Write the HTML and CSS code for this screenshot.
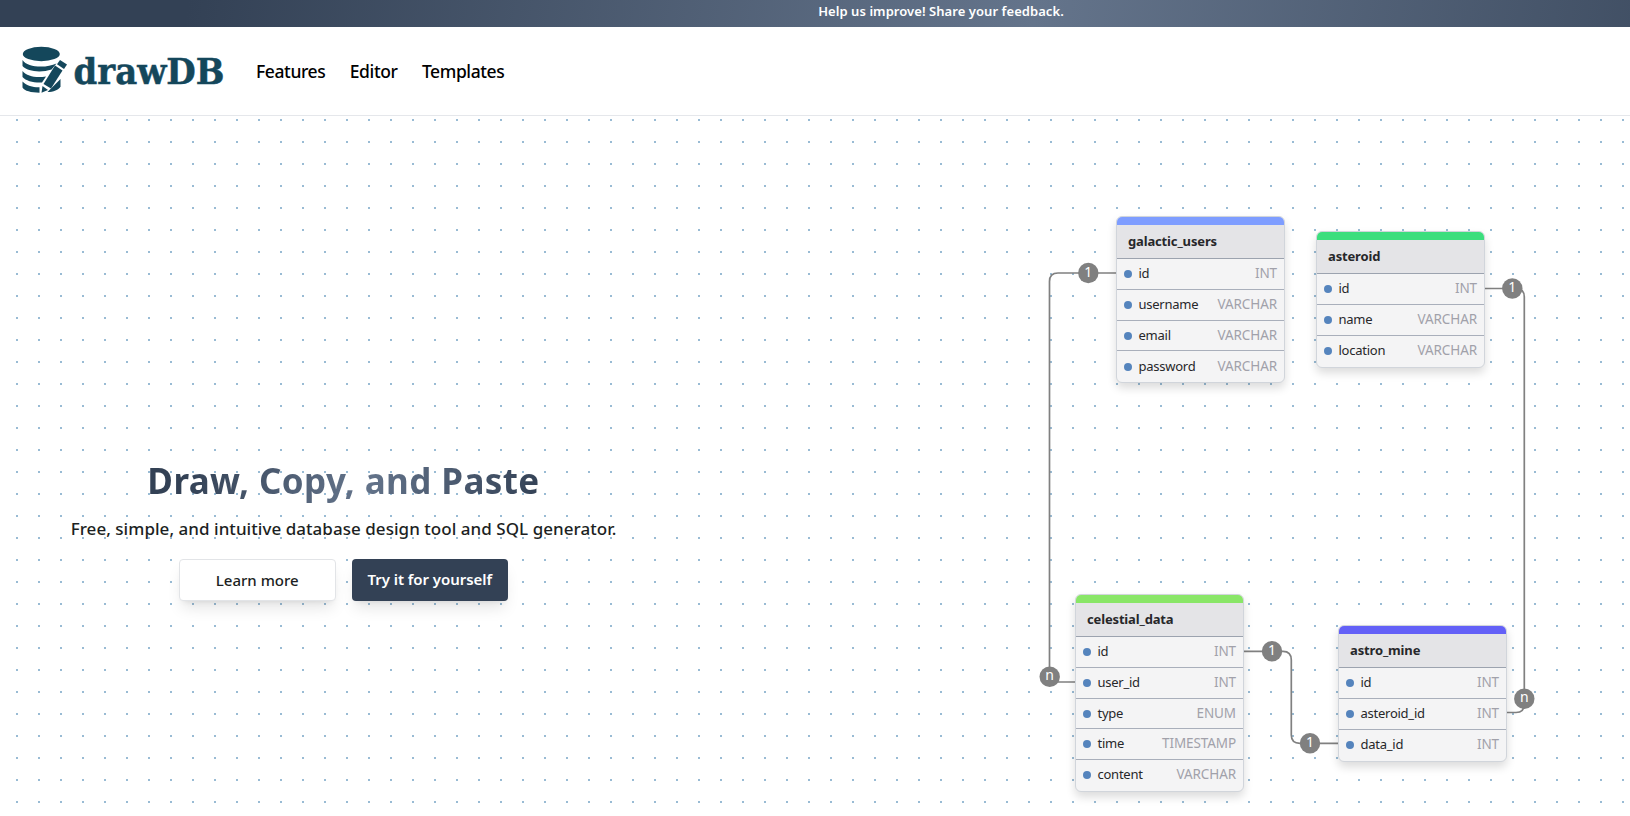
FILE: index.html
```html
<!DOCTYPE html>
<html lang="en">
<head>
<meta charset="utf-8">
<title>drawDB</title>
<link rel="stylesheet" href="styles.css">
</head>
<body>
<div class="banner"><a class="banner-link">Help us improve! Share your feedback.</a></div>
<header class="navbar">
  <svg class="logo" width="208" height="52" viewBox="0 0 208 52" aria-label="drawDB">
    <g class="logo-ink" transform="translate(-20 -45)">
      <ellipse cx="41.300" cy="54" rx="18.500" ry="7.200"/>
      <path d="M22.500 60C27 67.500 46 68.500 56.500 63.500L51.500 69.500C41 73 27 71.500 22.500 66Z"/>
      <path d="M22.500 71C27 76.500 36 78 46 76.500L42 82.500C34 83 26 81 22.500 77Z"/>
      <path d="M22.500 81.500C27 86 34 87.500 39.500 87.200V92.700C31 92.500 24.500 91 22.500 87.500Z"/>
      <path d="M60.500 79V86.500C59 90 53 92 47.500 92Z"/>
      <path d="M55 65.500L62.500 70.500L51 88.500L43.500 84Z"/>
      <path d="M60 60L67 64.500L64 69L57 64.300Z"/>
      <path d="M42.500 86L48 90L41.500 92.700Z"/>
    </g>
    <text class="logo-ink logo-text" x="53.500" y="39" textLength="151" lengthAdjust="spacingAndGlyphs">drawDB</text>
  </svg>
  <nav class="nav"><a>Features</a><a>Editor</a><a>Templates</a></nav>
</header>
<main class="hero">
  <section class="intro">
    <h1 class="title">Draw, Copy, and Paste</h1>
    <p class="tagline">Free, simple, and intuitive database design tool and SQL generator.</p>
    <div class="actions">
      <button class="btn btn-light">Learn more</button>
      <button class="btn btn-dark">Try it for yourself</button>
    </div>
  </section>
  <div class="canvas">
    <svg class="links" width="1630" height="700" viewBox="0 116 1630 700">
      <path d="M1116 273H1058Q1049.500 273 1049.500 281.500V673.500Q1049.500 682 1058 682H1076"/>
      <path d="M1485 288.500H1516Q1524.300 288.500 1524.300 297V704Q1524.300 712.500 1516 712.500H1506"/>
      <path d="M1244 651.300H1283Q1291.300 651.300 1291.300 660V735Q1291.300 743.300 1300 743.300H1339"/>
      <circle cx="1088.300" cy="273" r="10.200"/><text x="1088.300" y="277">1</text>
      <circle cx="1049.700" cy="676.700" r="10.200"/><text x="1049.700" y="680">n</text>
      <circle cx="1512.300" cy="288.500" r="10.200"/><text x="1512.300" y="292">1</text>
      <circle cx="1524.300" cy="698.700" r="10.200"/><text x="1524.300" y="702">n</text>
      <circle cx="1272" cy="651.300" r="10.200"/><text x="1272" y="655">1</text>
      <circle cx="1310" cy="743.300" r="10.200"/><text x="1310" y="747">1</text>
    </svg>
    <div class="table galactic">
      <div class="bar"></div><div class="name">galactic_users</div>
      <div class="row"><i></i><span>id</span><b>INT</b></div>
      <div class="row"><i></i><span>username</span><b>VARCHAR</b></div>
      <div class="row"><i></i><span>email</span><b>VARCHAR</b></div>
      <div class="row"><i></i><span>password</span><b>VARCHAR</b></div>
    </div>
    <div class="table asteroid">
      <div class="bar"></div><div class="name">asteroid</div>
      <div class="row"><i></i><span>id</span><b>INT</b></div>
      <div class="row"><i></i><span>name</span><b>VARCHAR</b></div>
      <div class="row"><i></i><span>location</span><b>VARCHAR</b></div>
    </div>
    <div class="table celestial">
      <div class="bar"></div><div class="name">celestial_data</div>
      <div class="row"><i></i><span>id</span><b>INT</b></div>
      <div class="row"><i></i><span>user_id</span><b>INT</b></div>
      <div class="row"><i></i><span>type</span><b>ENUM</b></div>
      <div class="row"><i></i><span>time</span><b>TIMESTAMP</b></div>
      <div class="row"><i></i><span>content</span><b>VARCHAR</b></div>
    </div>
    <div class="table mine">
      <div class="bar"></div><div class="name">astro_mine</div>
      <div class="row"><i></i><span>id</span><b>INT</b></div>
      <div class="row"><i></i><span>asteroid_id</span><b>INT</b></div>
      <div class="row"><i></i><span>data_id</span><b>INT</b></div>
    </div>
  </div>
</main>
</body>
</html>
```
FILE: styles.css
```css
* { box-sizing: border-box; }
body {
  margin: 0;
  height: 816px;
  overflow: hidden;
  display: flex;
  flex-direction: column;
  font-family: "Noto Sans", "Open Sans", sans-serif;
  color: #1c1f23;
  background: #fff;
}
.banner {
  height: 27px;
  flex: none;
  display: flex;
  justify-content: center;
  padding: 2px 0 0 252px;
  background: linear-gradient(100deg, #334155 10%, #64748b 55%, #334155 100%) 0 0 / 1882px 27px no-repeat;
}
.banner-link { color: #fff; font-size: 13px; line-height: 18px; font-weight: 600; letter-spacing: 0.060px; }
.navbar {
  height: 89px;
  flex: none;
  display: flex;
  align-items: center;
  gap: 28px;
  padding-left: 20px;
  border-bottom: 1px solid #e5e7eb;
}
.logo { display: block; }
.logo-ink { fill: #14475b; }
.logo-text { font: bold 35px "DejaVu Serif", serif; stroke: #14475b; stroke-width: .5px; }
.nav { display: flex; gap: 24.400px; font-size: 17.500px; font-weight: 500; line-height: 28px; letter-spacing: -0.400px; color: #000; }
.hero {
  position: relative;
  flex: 1;
  display: flex;
  background-image:
    linear-gradient(#fff 20px, transparent 20px),
    linear-gradient(90deg, #fff 20px, #99bbd4 20px);
  background-size: 22px 22px;
  background-position: -4px 5px;
}
.intro { width: 687px; padding-top: 341px; display: flex; flex-direction: column; align-items: center; }
.title {
  margin: 0;
  font-size: 35px;
  line-height: 48px;
  font-weight: 700;
  letter-spacing: 0.400px;
  color: transparent;
  background: linear-gradient(100deg, #334155 10%, #64748b 55%, #334155 100%);
  background-clip: text;
  -webkit-background-clip: text;
}
.tagline { margin: 10px 0 0; font-size: 17px; line-height: 28px; font-weight: 500; letter-spacing: 0.040px; white-space: nowrap; }
.actions { display: flex; gap: 16px; margin-top: 16px; }
.btn {
  width: 156.500px;
  height: 42px;
  padding: 0;
  border-radius: 4px;
  font: 500 15px/24px "Noto Sans", sans-serif;
  box-shadow: 0 10px 15px -3px rgba(0, 0, 0, .1), 0 4px 6px -4px rgba(0, 0, 0, .1);
}
.btn-light { background: #fff; color: #1c1f23; border: 1px solid #e2e4e7; }
.btn-dark { background: #334155; color: #fff; border: 0; padding-bottom: 2px; font-weight: 600; letter-spacing: -0.060px; }
.links { position: absolute; left: 0; top: 0; }
.links path { fill: none; stroke: #808080; stroke-width: 1.700; }
.links circle { fill: #808080; }
.links text { fill: #fff; font: 14px "Noto Sans", sans-serif; text-anchor: middle; }
.table {
  position: absolute;
  width: 169px;
  border: 1.500px solid #d1d5db;
  border-radius: 6px;
  overflow: hidden;
  background: #f4f4f5;
  box-shadow: 0 5px 10px rgba(0, 0, 0, .14);
  font-size: 13px;
  color: #27272a;
}
.galactic { left: 1116px; top: 100px; height: 167px; }
.asteroid { left: 1316px; top: 115px; height: 137px; }
.celestial { left: 1075px; top: 478px; height: 198px; }
.mine { left: 1338px; top: 509px; height: 137px; }
.bar { height: 8.400px; }
.galactic .bar { background: #7e9dff; }
.asteroid .bar { background: #3cde7d; }
.celestial .bar { background: #89e667; }
.mine .bar { background: #6360f7; }
.name { height: 34px; padding: 1px 10px 0 11px; background: #e4e4e7; font-weight: 700; line-height: 30px; letter-spacing: -0.150px; border-bottom: 1px solid #9ca3af; }
.row { height: 30.670px; display: flex; align-items: center; padding: 0 7px 2px 7px; border-bottom: 1px solid #a9afbb; }
.row:last-child { border-bottom: 0; }
.row i { width: 8px; height: 8px; margin: 2px 6.500px 0 0; border-radius: 50%; background: #5584bd; }
.row span { flex: 1; letter-spacing: -0.250px; }
.row b { font-weight: 400; font-size: 13.500px; letter-spacing: -0.100px; color: #a1a1aa; }
```
